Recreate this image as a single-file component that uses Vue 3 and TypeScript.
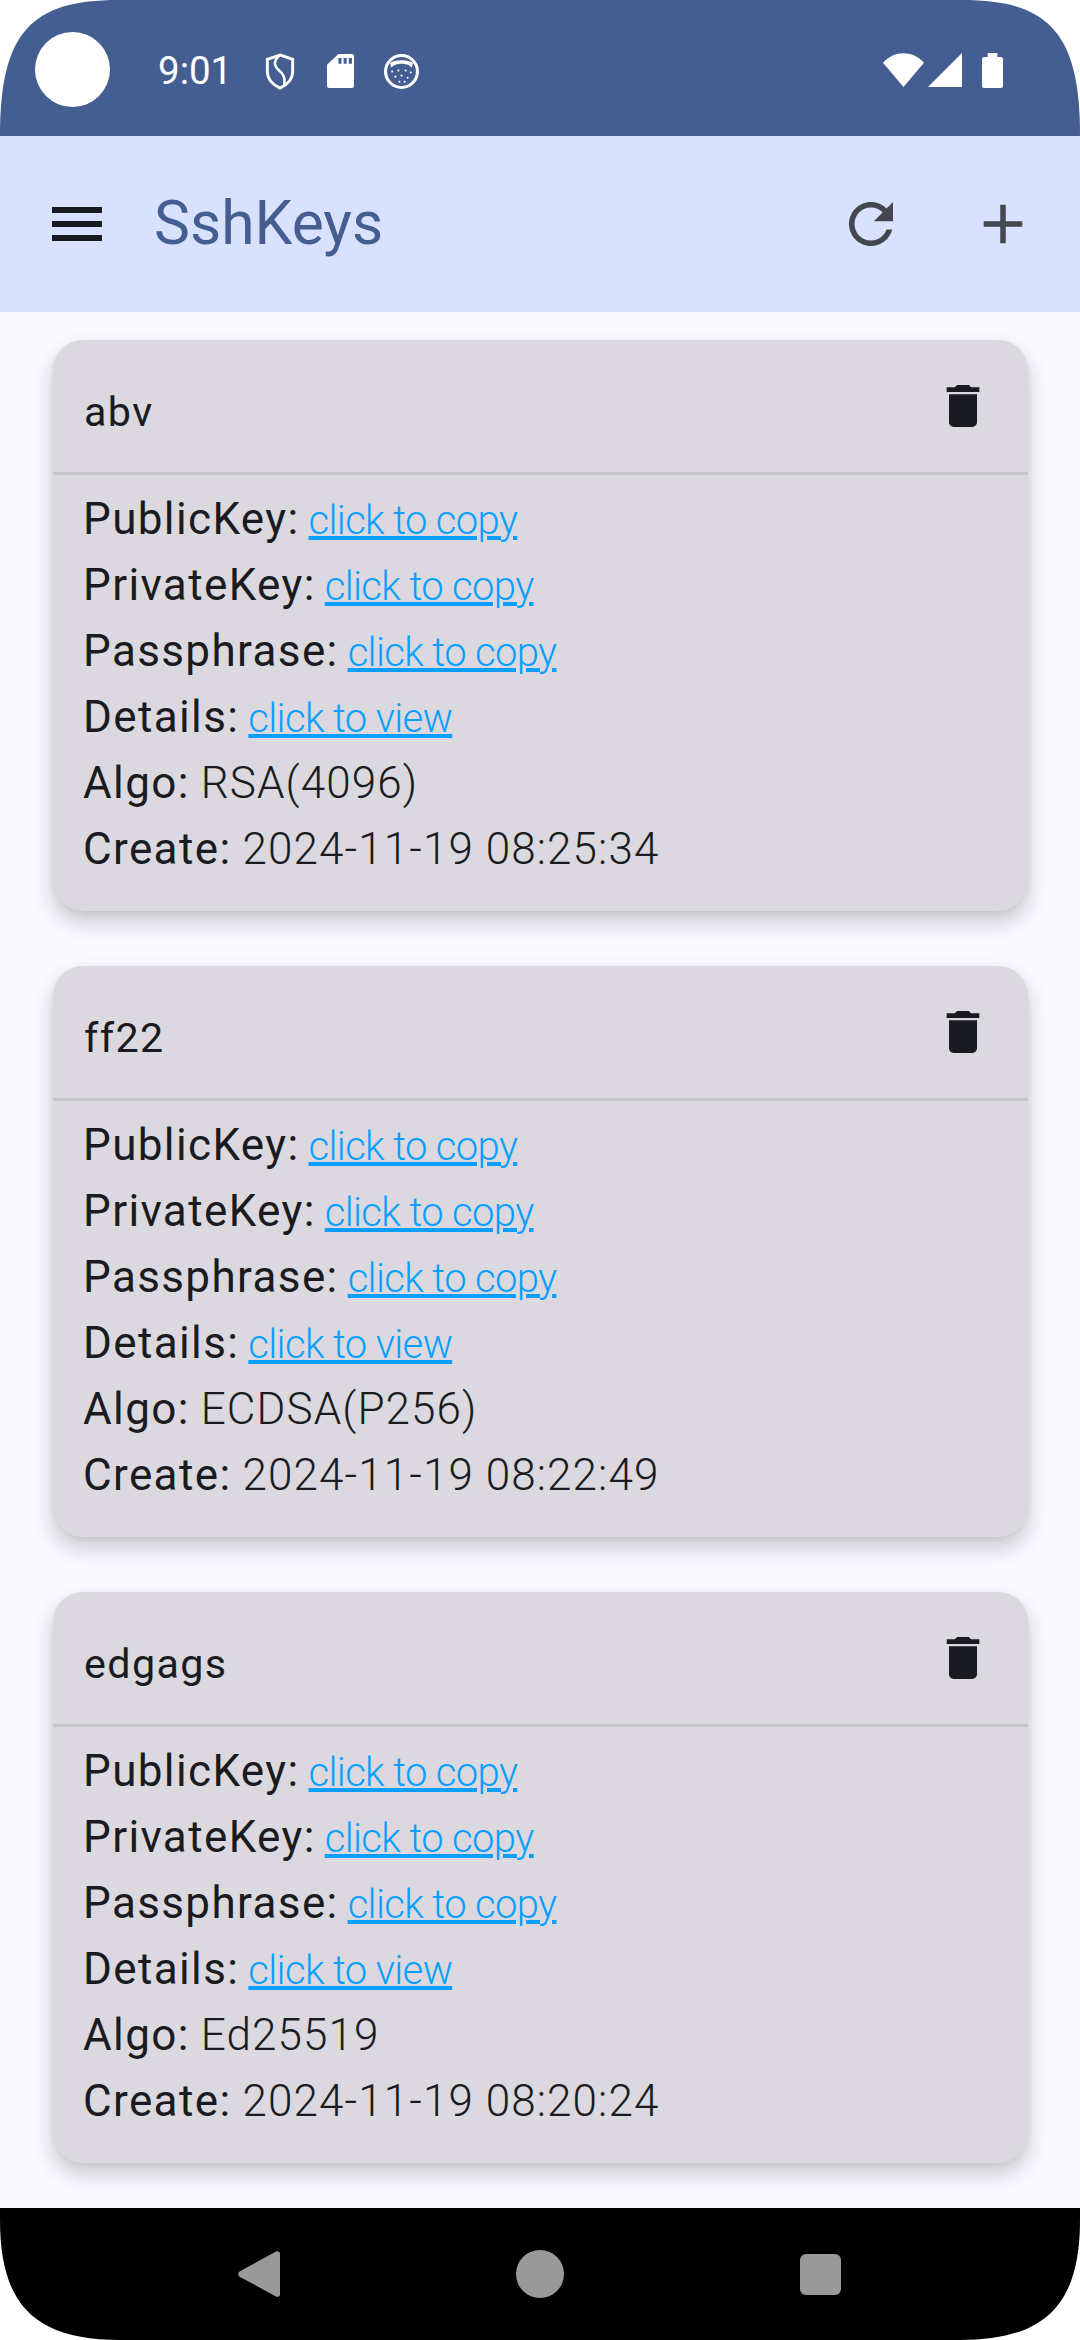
<script setup lang="ts">
interface KeyItem { name: string; algo: string; created: string }
const keys: KeyItem[] = [
  { name: 'abv', algo: 'RSA(4096)', created: '2024-11-19 08:25:34' },
  { name: 'ff22', algo: 'ECDSA(P256)', created: '2024-11-19 08:22:49' },
  { name: 'edgags', algo: 'Ed25519', created: '2024-11-19 08:20:24' },
]
const links = [
  { label: 'PublicKey:', text: 'click to copy' },
  { label: 'PrivateKey:', text: 'click to copy' },
  { label: 'Passphrase:', text: 'click to copy' },
  { label: 'Details:', text: 'click to view' },
]
</script>

<template>
  <div class="screen">
    <header class="status">
      <div class="cam"></div>
      <span class="time">9:01</span>
      <svg class="ic-shield" viewBox="0 0 30 38" width="30" height="37" fill="none" stroke="#fff" stroke-width="3">
        <path d="M15 2 L28 6.500 V19 C28 27 22 33 15 36 C8 33 2 27 2 19 V6.500 Z" />
        <path d="M15 2 C9 7 8 12 13 17 C18 21 21 25 19 34" stroke-width="2.600" />
      </svg>
      <svg class="ic-sd" viewBox="0 0 26 35" width="27" height="34" preserveAspectRatio="none">
        <path fill="#fff" fill-rule="evenodd" d="M11 0 H24 A2 2 0 0 1 26 2 V33 A2 2 0 0 1 24 35 H2 A2 2 0 0 1 0 33 V11 Z M11 4 V10 H14 V4 Z M16 4 V10 H19 V4 Z M21 4 V10 H24 V4 Z" />
      </svg>
      <svg class="ic-cat" viewBox="0 0 34 34" width="35" height="35">
        <circle cx="17" cy="17" r="15.500" fill="none" stroke="#fff" stroke-width="3" />
        <path fill="#fff" d="M6 9 C9 5 25 5 28 9 L27 13 L24 11 C20 9 14 9 10 11 L7 13 Z" />
        <g fill="#fff">
          <circle cx="8" cy="17" r="1" /><circle cx="14" cy="16" r="1" /><circle cx="21" cy="16" r="1" /><circle cx="26" cy="18" r="1" />
          <circle cx="11" cy="22" r="1" /><circle cx="17" cy="21" r="1" /><circle cx="23" cy="23" r="1" /><circle cx="15" cy="27" r="1" /><circle cx="20" cy="27" r="1" />
        </g>
      </svg>
      <div class="spacer"></div>
      <svg class="ic-wifi" viewBox="0 0 42 35" width="41" height="34" preserveAspectRatio="none"><path fill="#fff" d="M0 10 C12 -3 30 -3 42 10 L21 35 Z" /></svg>
      <svg class="ic-signal" viewBox="0 0 35 35" width="34" height="34"><path fill="#fff" d="M35 0 V35 H0 Z" /></svg>
      <svg class="ic-batt" viewBox="0 0 22 36" width="21" height="35" preserveAspectRatio="none"><path fill="#fff" d="M6 0 H16 V4 H20 A2 2 0 0 1 22 6 V34 A2 2 0 0 1 20 36 H2 A2 2 0 0 1 0 34 V6 A2 2 0 0 1 2 4 H6 Z" /></svg>
    </header>

    <div class="appbar">
      <div class="burger"><i></i><i></i><i></i></div>
      <h1 class="title">SshKeys</h1>
      <svg class="ic-refresh" viewBox="0 0 24 24" width="66" height="66">
        <path fill="#44474f" d="M17.650 6.350C16.200 4.900 14.210 4 12 4c-4.420 0-7.990 3.580-7.990 8s3.570 8 7.990 8c3.730 0 6.840-2.550 7.730-6h-2.080c-.82 2.330-3.040 4-5.650 4-3.310 0-6-2.690-6-6s2.690-6 6-6c1.660 0 3.140.69 4.220 1.780L13 11h7V4l-2.350 2.350z" />
      </svg>
      <svg class="ic-plus" viewBox="0 0 24 24" width="66" height="66">
        <path fill="#44474f" d="M19 13h-6v6h-2v-6H5v-2h6V5h2v6h6v2z" />
      </svg>
    </div>

    <main class="list">
      <section v-for="k in keys" :key="k.name" class="card">
        <div class="card-head">
          <span class="name">{{ k.name }}</span>
          <svg class="ic-trash" viewBox="0 0 24 24" width="56" height="56">
            <path fill="#1a1b20" d="M6 19c0 1.100.9 2 2 2h8c1.100 0 2-.9 2-2V7H6v12zM19 4h-3.500l-1-1h-5l-1 1H5v2h14V4z" />
          </svg>
        </div>
        <div class="card-body">
          <div v-for="l in links" :key="l.label" class="row">
            <span class="label">{{ l.label }}</span>
            <a class="link">{{ l.text }}</a>
          </div>
          <div class="row"><span class="label wide">Algo:</span><span class="val">{{ k.algo }}</span></div>
          <div class="row"><span class="label wide">Create:</span><span class="val">{{ k.created }}</span></div>
        </div>
      </section>
    </main>

    <footer class="nav">
      <svg viewBox="0 0 42 48" width="42" height="46" preserveAspectRatio="none"><path fill="#999" d="M38 0.500 C40 -0.500 42 1 42 3 V45 C42 47 40 48.500 38 47.500 L2 27 C-0.500 25.500 -0.500 22.500 2 21 Z" /></svg>
      <div class="nav-circle"></div>
      <div class="nav-square"></div>
    </footer>
  </div>
</template>

<style scoped>
.screen {
  width: 1080px;
  height: 2340px;
  display: flex;
  flex-direction: column;
  overflow: hidden;
  background: #faf9ff;
  font-family: Roboto, "Noto Sans", sans-serif;
  clip-path: path('M0 135 C0 32 32 0 118 0 H962 C1048 0 1080 32 1080 135 V2220 C1080 2305 1045 2340 960 2340 H120 C35 2340 0 2305 0 2220 Z');
}
.status {
  height: 136px;
  flex: none;
  box-sizing: border-box;
  background: #445e91;
  display: flex;
  align-items: center;
  padding: 0 77px 0 35px;
  color: #fff;
}
.cam { width: 75px; height: 75px; border-radius: 50%; background: #fff; margin-top: 3px; }
.time { font-size: 38.500px; margin-left: 48px; width: 107px; margin-top: 4px; }
.ic-shield { margin-top: 7px; }
.ic-sd { margin-left: 32px; margin-top: 6px; }
.ic-cat { margin-left: 30px; margin-top: 6px; }
.spacer { flex: 1; }
.ic-wifi { margin-top: 4px; }
.ic-signal { margin-left: 4px; margin-top: 4px; }
.ic-batt { margin-left: 20px; margin-top: 5px; }
.appbar {
  height: 176px;
  flex: none;
  box-sizing: border-box;
  background: #d8e2ff;
  display: flex;
  align-items: center;
  padding: 0 44px 0 52px;
}
.burger { width: 50px; display: flex; flex-direction: column; gap: 8px; }
.burger i { display: block; height: 6px; background: #1a1b20; }
.title {
  flex: 1;
  margin: -2px 0 0 52px;
  font-size: 60.500px;
  font-weight: 400;
  color: #445e91;
}
.ic-plus { margin-left: 66px; }
.list {
  flex: 1;
  min-height: 0;
  overflow: hidden;
  padding: 28px 52px 0 53px;
  display: flex;
  flex-direction: column;
  gap: 55.500px;
}
.card {
  flex: none;
  height: 570.500px;
  background: #dbd9df;
  border-radius: 30px;
  box-shadow: 0 11px 22px rgba(0, 0, 0, 0.2), 0 2px 6px rgba(0, 0, 0, 0.05);
}
.card-head {
  height: 135px;
  box-sizing: border-box;
  border-bottom: 3px solid #c6c6c9;
  display: flex;
  align-items: center;
  justify-content: space-between;
  padding: 0 37px 0 31px;
}
.name { font-size: 41.250px; letter-spacing: 1.375px; color: #1a1b20; margin-top: 12px; }
.card-body { padding: 11px 0 0 30px; }
.row { height: 66px; line-height: 66px; font-size: 44px; color: #1a1b20; white-space: nowrap; letter-spacing: 1.375px; }
.label { margin-right: 9px; }
.label.wide { margin-right: 11px; }
.val { font-weight: 300; letter-spacing: 1.100px; }
.link { font-size: 40px; font-weight: 300; color: #0a9fff; text-decoration: underline; letter-spacing: -0.650px; }
.nav {
  height: 132px;
  flex: none;
  background: #000;
  display: flex;
  align-items: center;
}
.nav svg { margin-left: 238px; }
.nav-circle { width: 48px; height: 48px; border-radius: 50%; background: #999; margin-left: 236px; }
.nav-square { width: 41px; height: 41px; border-radius: 6px; background: #999; margin-left: 236px; }
</style>

<style>
html, body { background: #fff; overflow: hidden; }
</style>
